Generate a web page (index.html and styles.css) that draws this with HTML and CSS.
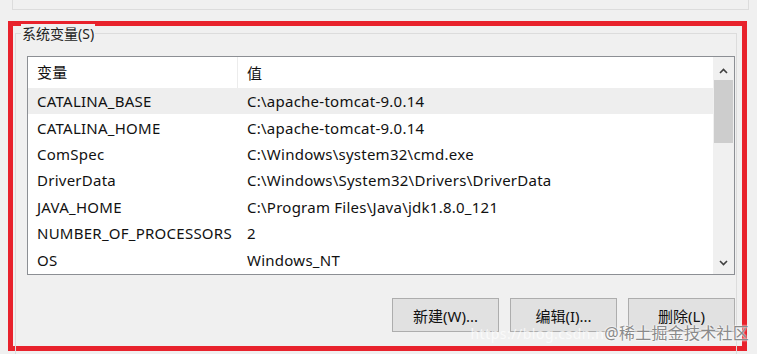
FILE: index.html
```html
<!DOCTYPE html>
<html lang="zh-CN">
<head>
  <meta charset="UTF-8" />
  <meta name="viewport" content="width=device-width, initial-scale=1.0" />
  <title>系统变量</title>
  <link rel="stylesheet" href="styles.css">
</head>
<body>
  <div class="top-panel"></div>

  <div class="highlight">
    <div class="groupbox">
      <div class="group-title">系统变量(S)</div>
      <div class="listbox">
        <div class="list-body">
          <div class="list-head">
            <div class="col-name">变量</div>
            <div class="col-value">值</div>
          </div>
          <div class="row selected"><div class="col-name">CATALINA_BASE</div><div class="col-value">C:\apache-tomcat-9.0.14</div></div>
          <div class="row"><div class="col-name">CATALINA_HOME</div><div class="col-value">C:\apache-tomcat-9.0.14</div></div>
          <div class="row"><div class="col-name">ComSpec</div><div class="col-value">C:\Windows\system32\cmd.exe</div></div>
          <div class="row"><div class="col-name">DriverData</div><div class="col-value">C:\Windows\System32\Drivers\DriverData</div></div>
          <div class="row"><div class="col-name">JAVA_HOME</div><div class="col-value">C:\Program Files\Java\jdk1.8.0_121</div></div>
          <div class="row"><div class="col-name">NUMBER_OF_PROCESSORS</div><div class="col-value">2</div></div>
          <div class="row"><div class="col-name">OS</div><div class="col-value">Windows_NT</div></div>
        </div>
        <div class="scrollbar">
          <div class="arrow arrow-up">
            <svg width="9" height="6" viewBox="0 0 9 6"><path d="M1 5 L4.5 1.5 L8 5" fill="none" stroke="#404040" stroke-width="1.6"/></svg>
          </div>
          <div class="thumb"></div>
          <div class="track"></div>
          <div class="arrow arrow-down">
            <svg width="9" height="6" viewBox="0 0 9 6"><path d="M1 1 L4.5 4.5 L8 1" fill="none" stroke="#404040" stroke-width="1.6"/></svg>
          </div>
        </div>
      </div>
      <div class="buttons">
        <button class="btn">新建(W)...</button>
        <button class="btn">编辑(I)...</button>
        <button class="btn">删除(L)</button>
      </div>
    </div>
  </div>

  <div class="watermark"><span class="wm-url">https://blog.csdn.n</span><span class="wm-name">@稀土掘金技术社区</span></div>
</body>
</html>
```

FILE: styles.css
```css
body {
  margin: 0;
  background-color: #f0f0f0;
  font-family: "Noto Sans", "Noto Sans CJK SC", sans-serif;
  font-size: 15px;
  letter-spacing: 0.25px;
  color: #111;
  width: 757px;
  height: 354px;
  overflow: hidden;
  position: relative;
}
.top-panel {
  margin-left: 12px;
  width: 737px;
  height: 10px;
  border: 1px solid #dcdcdc;
  border-top: none;
  box-sizing: border-box;
}
.highlight {
  margin: 11px 0 0 8px;
  width: 739px;
  height: 330px;
  border: 5px solid #e8222c;
  box-sizing: border-box;
  padding: 7px 5px 0 2px;
}
.groupbox {
  border: 1px solid #dcdcdc;
  border-bottom: none;
  height: 330px;
  padding: 0 0 0 11px;
}
.group-title {
  width: fit-content;
  margin: -10px 0 0 -6px;
  padding: 0 1px;
  background-color: #f0f0f0;
  font-size: 14px;
  letter-spacing: 0;
  line-height: 19px;
  color: #222;
}
.listbox {
  margin-top: 13px;
  width: 708px;
  height: 219px;
  border: 1px solid #8c8f94;
  box-sizing: border-box;
  background-color: #fff;
  display: flex;
}
.list-body {
  flex: 1;
  overflow: hidden;
}
.list-head {
  display: flex;
  height: 31px;
  align-items: center;
}
.list-head .col-name {
  border-right: 1px solid #ececec;
  height: 31px;
  line-height: 31px;
}
.row {
  display: flex;
  height: 26.4px;
  align-items: center;
  white-space: nowrap;
}
.row.selected {
  background-color: #eeeeee;
}
.col-name {
  width: 210px;
  padding-left: 9px;
  box-sizing: border-box;
}
.col-value {
  padding-left: 9px;
}
.scrollbar {
  width: 21px;
  background-color: #f0f0f0;
  display: flex;
  flex-direction: column;
  align-items: center;
}
.arrow {
  height: 23px;
  display: flex;
  justify-content: center;
}
.arrow-up {
  align-items: flex-end;
  padding-bottom: 6px;
  box-sizing: border-box;
}
.arrow-down {
  align-items: center;
}
.thumb {
  width: 19px;
  height: 63px;
  background-color: #cdcdcd;
}
.track {
  flex: 1;
}
.buttons {
  display: flex;
  justify-content: flex-end;
  gap: 11px;
  width: 708px;
  margin-top: 23px;
}
.btn {
  width: 107px;
  height: 34px;
  background-color: #e1e1e1;
  border: 1px solid #adadad;
  font-family: "Noto Sans", "Noto Sans CJK SC", sans-serif;
  font-size: 15px;
  color: #111;
  padding: 0;
}
.watermark {
  position: absolute;
  right: 8px;
  top: 322px;
  white-space: nowrap;
  font-size: 16px;
  line-height: 22px;
}
.wm-url {
  color: rgba(255, 255, 255, 0.7);
  font-size: 14px;
  letter-spacing: 0.5px;
}
.wm-name {
  color: #8a8a8a;
  text-shadow: 0 0 2px #fff, 0 0 2px #fff;
}
```
